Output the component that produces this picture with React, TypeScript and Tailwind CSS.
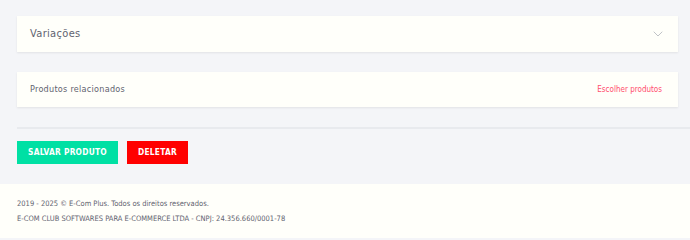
import { ChevronDown } from "lucide-react";

function Card({ children }: { children: React.ReactNode }) {
  return (
    <div className="flex items-center justify-between bg-[#fffffa] px-[13px] shadow-[0_1px_2px_rgba(0,0,0,0.08)]">
      {children}
    </div>
  );
}

export default function App() {
  return (
    <main className="min-h-screen bg-[#f4f5f8] font-['DejaVu_Sans_Condensed','Open_Sans',sans-serif]">
      <div className="pl-[17px] pt-4">
        <div className="flex flex-col gap-5 pr-3">
          <Card>
            <div className="flex h-9 w-full items-center justify-between">
              <span className="text-[11px] tracking-[0.03em] text-[#5f6370]">Variações</span>
              <ChevronDown className="-mr-px h-4 w-4 text-[#a0a4ad]" strokeWidth={1} />
            </div>
          </Card>
          <Card>
            <div className="flex h-[35px] w-full items-center justify-between">
              <span className="text-[9px] tracking-[0.03em] text-[#5f6370]">Produtos relacionados</span>
              <a href="#" className="mr-[3px] text-[8px] text-[#ff4d6d]">Escolher produtos</a>
            </div>
          </Card>
        </div>
        <div className="mt-5 border-t-2 border-[#e8eaee] pt-[12px] pb-5">
          <div className="flex gap-[9px]">
            <button className="h-[23px] w-[101px] bg-[#00e0a4] text-[8.3px] font-bold tracking-[0.03em] text-white">
              SALVAR PRODUTO
            </button>
            <button className="h-[23px] w-[61px] bg-[#ff0000] text-[8.3px] font-bold tracking-[0.03em] text-white">
              DELETAR
            </button>
          </div>
        </div>
      </div>
      <footer className="bg-[#fffffa] px-[17px] pt-[12px] pb-3 text-[7.5px] leading-[15px] text-[#5f6370]">
        <p>2019 - 2025 © E-Com Plus. Todos os direitos reservados.</p>
        <p>E-COM CLUB SOFTWARES PARA E-COMMERCE LTDA - CNPJ: 24.356.660/0001-78</p>
      </footer>
    </main>
  );
}
